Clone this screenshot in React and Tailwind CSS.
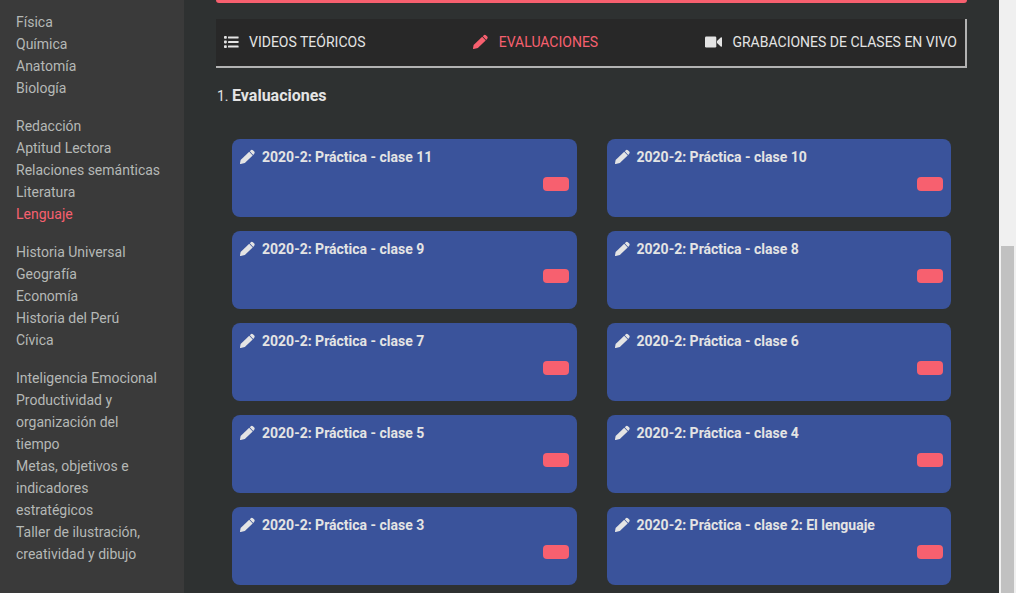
import clsx from 'clsx'

const courseGroups = [
  ['Física', 'Química', 'Anatomía', 'Biología'],
  ['Redacción', 'Aptitud Lectora', 'Relaciones semánticas', 'Literatura', 'Lenguaje'],
  ['Historia Universal', 'Geografía', 'Economía', 'Historia del Perú', 'Cívica'],
  [
    'Inteligencia Emocional',
    'Productividad y organización del tiempo',
    'Metas, objetivos e indicadores estratégicos',
    'Taller de ilustración, creatividad y dibujo',
  ],
]

const activeCourse = 'Lenguaje'

const evaluations = [
  '2020-2: Práctica - clase 11',
  '2020-2: Práctica - clase 10',
  '2020-2: Práctica - clase 9',
  '2020-2: Práctica - clase 8',
  '2020-2: Práctica - clase 7',
  '2020-2: Práctica - clase 6',
  '2020-2: Práctica - clase 5',
  '2020-2: Práctica - clase 4',
  '2020-2: Práctica - clase 3',
  '2020-2: Práctica - clase 2: El lenguaje',
]

function ListIcon() {
  return (
    <svg className="w-[15px] h-4 shrink-0" viewBox="0 0 15 16" fill="currentColor" aria-hidden="true">
      <rect x="0" y="2" width="2.8" height="2.8" rx="0.8" />
      <rect x="0" y="6.6" width="2.8" height="2.8" rx="0.8" />
      <rect x="0" y="11.2" width="2.8" height="2.8" rx="0.8" />
      <rect x="4" y="2.4" width="10.6" height="2" rx="0.4" />
      <rect x="4" y="7" width="10.6" height="2" rx="0.4" />
      <rect x="4" y="11.6" width="10.6" height="2" rx="0.4" />
    </svg>
  )
}

function PencilIcon() {
  return (
    <svg className="w-4 h-4 shrink-0" viewBox="0 0 16 16" fill="currentColor" aria-hidden="true">
      <path d="M9.2 2.8 12.7 6.4 4.8 14 0.7 15.1Q0 15.2 0 14.6L0.6 10.9Z" />
      <path d="M9.8 2.3 11.1 1.1Q12 0.3 12.9 1.2L14.3 2.6Q15.1 3.5 14.4 4.5L13.2 5.9Z" />
    </svg>
  )
}

function VideoIcon() {
  return (
    <svg className="w-[17px] h-4 shrink-0" viewBox="0 0 17 16" fill="currentColor" aria-hidden="true">
      <rect x="0" y="2.5" width="11.3" height="11" rx="1.2" />
      <path d="M12 7 15.7 3.5Q17 2.7 17 4V12Q17 13.3 15.7 12.5L12 9Z" />
    </svg>
  )
}

function Sidebar() {
  return (
    <nav className="w-46 shrink-0 bg-[#3a3a3a] pl-4 pr-5 pt-[11px] space-y-4">
      {courseGroups.map((group) => (
        <ul key={group[0]}>
          {group.map((course) => (
            <li key={course}>
              <a href="#" className={course === activeCourse ? 'text-[#f7606f]' : 'text-[#b5b8b6]'}>
                {course}
              </a>
            </li>
          ))}
        </ul>
      ))}
    </nav>
  )
}

function Tab({ icon, label, active }) {
  return (
    <button type="button" className={clsx('flex items-center gap-[10px] cursor-pointer', active && 'text-[#f7606f]')}>
      {icon}
      <span>{label}</span>
    </button>
  )
}

function EvaluationCard({ title }) {
  return (
    <article className="flex flex-col gap-[10px] h-[78px] p-2 rounded-lg bg-[#3a539b]">
      <h3 className="flex items-center gap-[6px] leading-5 font-bold">
        <PencilIcon />
        {title}
      </h3>
      <span className="self-end w-[26px] h-[14px] rounded bg-[#f7606f]"></span>
    </article>
  )
}

function App() {
  return (
    <div className="flex min-h-screen bg-[#2e3131] text-sm leading-[22px] text-[#e4e4e4] font-[Roboto,sans-serif]">
      <Sidebar />

      <main className="flex-1 min-w-0 px-8">
        <div className="h-[3px] rounded-b-md bg-[#f7606f]"></div>

        <div className="mt-4 flex justify-between px-2 pt-3 pb-[13px] bg-[#282828] border-r-2 border-b-2 border-[#b2b2b2]">
          <Tab icon={<ListIcon />} label="VIDEOS TEÓRICOS" />
          <Tab icon={<PencilIcon />} label="EVALUACIONES" active />
          <Tab icon={<VideoIcon />} label="GRABACIONES DE CLASES EN VIVO" />
        </div>

        <h2 className="mt-4 px-px pt-px">
          1. <span className="text-base leading-[22px] font-bold">Evaluaciones</span>
        </h2>

        <section className="mt-8 mb-2 px-4 grid grid-cols-2 gap-x-[30px] gap-y-[14px]">
          {evaluations.map((title) => (
            <EvaluationCard key={title} title={title} />
          ))}
        </section>
      </main>

      {/* Scroll track */}
      <div className="flex w-[17px] shrink-0 bg-[#f0f0f0] px-[2px] pt-[246px]">
        <div className="flex-1 bg-[#c1c1c1]"></div>
      </div>
    </div>
  )
}

export default App
